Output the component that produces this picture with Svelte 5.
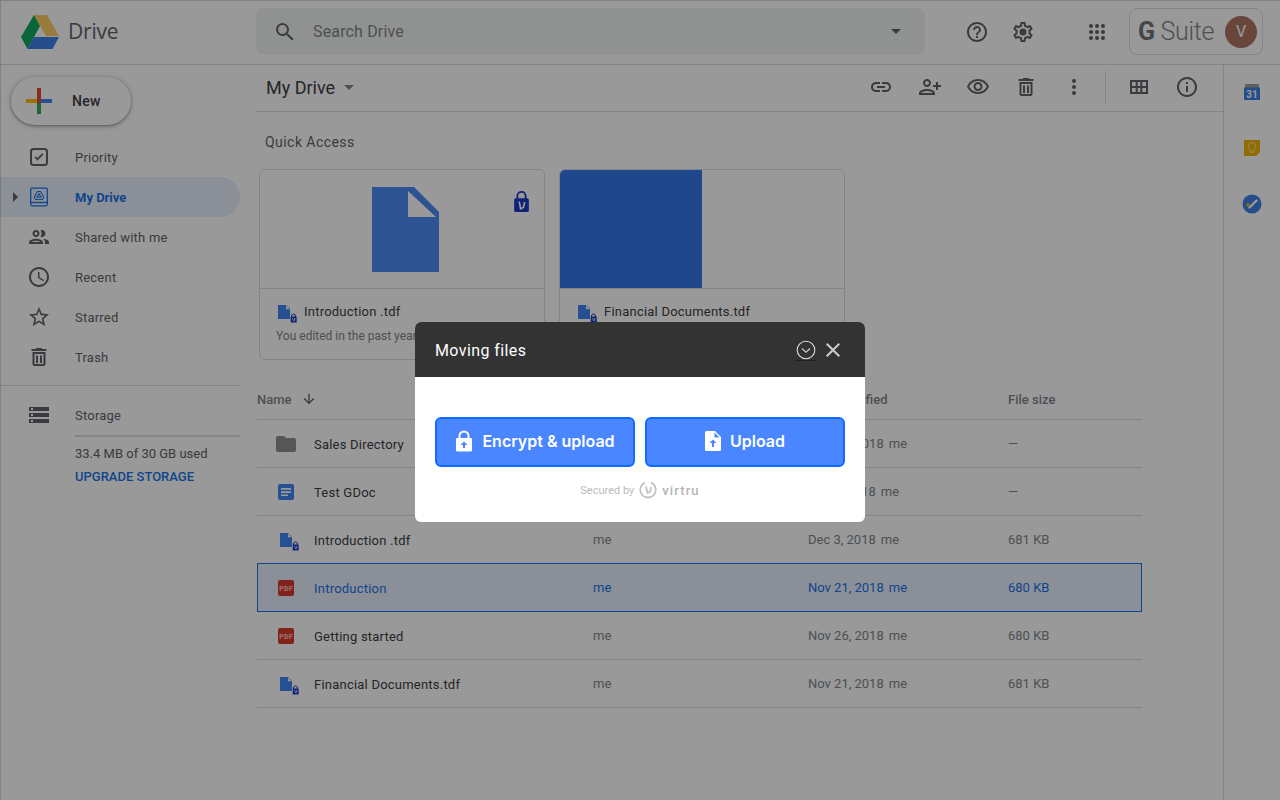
<script>
  const icons = {
    search: "M15.5 14h-.79l-.28-.27A6.471 6.471 0 0 0 16 9.5 6.5 6.5 0 1 0 9.5 16c1.61 0 3.09-.59 4.23-1.57l.27.28v.79l5 4.99L20.49 19l-4.99-5zm-6 0C7.01 14 5 11.99 5 9.5S7.01 5 9.5 5 14 7.01 14 9.5 11.99 14 9.5 14z",
    help: "M11 18h2v-2h-2v2zm1-16C6.48 2 2 6.48 2 12s4.48 10 10 10 10-4.48 10-10S17.52 2 12 2zm0 18c-4.41 0-8-3.59-8-8s3.59-8 8-8 8 3.59 8 8-3.59 8-8 8zm0-14c-2.21 0-4 1.79-4 4h2c0-1.1.9-2 2-2s2 .9 2 2c0 2-3 1.75-3 5h2c0-2.25 3-2.5 3-5 0-2.21-1.79-4-4-4z",
    gear: "M19.43 12.98c.04-.32.07-.64.07-.98 0-.34-.03-.66-.07-.98l2.11-1.65c.19-.15.24-.42.12-.64l-2-3.46c-.09-.16-.26-.25-.44-.25-.06 0-.12.01-.17.03l-2.49 1c-.52-.4-1.08-.73-1.69-.98l-.38-2.65C14.46 2.18 14.25 2 14 2h-4c-.25 0-.46.18-.49.42l-.38 2.65c-.61.25-1.17.59-1.69.98l-2.49-1c-.06-.02-.12-.03-.18-.03-.17 0-.34.09-.43.25l-2 3.46c-.13.22-.07.49.12.64l2.11 1.65c-.04.32-.07.65-.07.98 0 .33.03.66.07.98l-2.11 1.65c-.19.15-.24.42-.12.64l2 3.46c.09.16.26.25.44.25.06 0 .12-.01.17-.03l2.49-1c.52.4 1.08.73 1.69.98l.38 2.65c.03.24.24.42.49.42h4c.25 0 .46-.18.49-.42l.38-2.65c.61-.25 1.17-.59 1.69-.98l2.49 1c.06.02.12.03.18.03.17 0 .34-.09.43-.25l2-3.46c.12-.22.07-.49-.12-.64l-2.11-1.65zm-1.98-1.71c.04.31.05.52.05.73 0 .21-.02.43-.05.73l-.14 1.13.89.7 1.08.84-.7 1.21-1.27-.51-1.04-.42-.9.68c-.43.32-.84.56-1.25.73l-1.06.43-.16 1.13-.2 1.35h-1.4l-.19-1.35-.16-1.13-1.06-.43c-.43-.18-.83-.41-1.23-.71l-.91-.7-1.06.43-1.27.51-.7-1.21 1.08-.84.89-.7-.14-1.13c-.03-.31-.05-.54-.05-.74s.02-.43.05-.73l.14-1.13-.89-.7-1.08-.84.7-1.21 1.27.51 1.04.42.9-.68c.43-.32.84-.56 1.25-.73l1.06-.43.16-1.13.2-1.35h1.39l.19 1.35.16 1.13 1.06.43c.43.18.83.41 1.23.71l.91.7 1.06-.43 1.27-.51.7 1.21-1.07.85-.89.7.14 1.13zM12 8.5a3.5 3.5 0 1 0 0 7 3.5 3.5 0 0 0 0-7z",
    apps: "M6 8a2 2 0 1 0 0-4 2 2 0 0 0 0 4zm6 0a2 2 0 1 0 0-4 2 2 0 0 0 0 4zm6 0a2 2 0 1 0 0-4 2 2 0 0 0 0 4zM6 14a2 2 0 1 0 0-4 2 2 0 0 0 0 4zm6 0a2 2 0 1 0 0-4 2 2 0 0 0 0 4zm6 0a2 2 0 1 0 0-4 2 2 0 0 0 0 4zM6 20a2 2 0 1 0 0-4 2 2 0 0 0 0 4zm6 0a2 2 0 1 0 0-4 2 2 0 0 0 0 4zm6 0a2 2 0 1 0 0-4 2 2 0 0 0 0 4z",
    link: "M3.9 12c0-1.71 1.39-3.1 3.1-3.1h4V7H7c-2.76 0-5 2.24-5 5s2.24 5 5 5h4v-1.9H7c-1.71 0-3.1-1.39-3.1-3.1zM8 13h8v-2H8v2zm9-6h-4v1.9h4c1.71 0 3.1 1.39 3.1 3.1s-1.39 3.1-3.1 3.1h-4V17h4c2.76 0 5-2.24 5-5s-2.24-5-5-5z",
    personAdd: "M9 12c2.21 0 4-1.79 4-4s-1.79-4-4-4-4 1.79-4 4 1.79 4 4 4zm0-6c1.1 0 2 .9 2 2s-.9 2-2 2-2-.9-2-2 .9-2 2-2zm0 8c-2.67 0-8 1.34-8 4v2h16v-2c0-2.66-5.33-4-8-4zm-6 4c.22-.72 3.31-2 6-2 2.7 0 5.8 1.29 6 2H3zm17-3v-3h3v-2h-3V7h-2v3h-3v2h3v3h2z",
    eye: "M12 6c3.79 0 7.17 2.13 8.82 5.5C19.17 14.87 15.79 17 12 17s-7.17-2.13-8.82-5.5C4.83 8.13 8.21 6 12 6m0-2C7 4 2.73 7.11 1 11.5 2.73 15.89 7 19 12 19s9.27-3.11 11-7.5C21.27 7.11 17 4 12 4zm0 5c1.38 0 2.5 1.12 2.5 2.5S13.38 14 12 14s-2.5-1.12-2.5-2.5S10.62 9 12 9m0-2c-2.48 0-4.5 2.02-4.5 4.5S9.52 16 12 16s4.5-2.02 4.5-4.5S14.48 7 12 7z",
    trash: "M14.5 3h-5l-1 1H4.500v2h15V4h-4l-1-1zM5.500 7v12c0 1.1.9 2 2 2h9c1.100 0 2-.9 2-2V7h-13zm2 2h9v10h-9V9zm1.500 1.500V18h2v-7.500H9zm4 0V18h2v-7.500h-2z",
    more: "M12 8a2 2 0 1 0 0-4 2 2 0 0 0 0 4zm0 2a2 2 0 1 0 0 4 2 2 0 0 0 0-4zm0 6a2 2 0 1 0 0 4 2 2 0 0 0 0-4z",
    grid: "M3 5v14h18V5H3zm2 2h3.7v4H5V7zm5.7 0h2.6v4h-2.6V7zm4.6 0H19v4h-3.7V7zM5 13h3.7v4H5v-4zm5.7 0h2.6v4h-2.6v-4zm4.6 0H19v4h-3.7v-4z",
    info: "M11 7h2v2h-2V7zm0 4h2v6h-2v-6zm1-9C6.48 2 2 6.48 2 12s4.48 10 10 10 10-4.48 10-10S17.52 2 12 2zm0 18c-4.41 0-8-3.59-8-8s3.59-8 8-8 8 3.59 8 8-3.59 8-8 8z",
    priority: "M6.500 3h11A3.500 3.500 0 0 1 21 6.500v11a3.500 3.500 0 0 1-3.500 3.500h-11A3.500 3.500 0 0 1 3 17.500v-11A3.500 3.500 0 0 1 6.500 3zm0 2A1.500 1.500 0 0 0 5 6.500v11A1.500 1.500 0 0 0 6.500 19h11a1.500 1.500 0 0 0 1.500-1.500v-11A1.500 1.500 0 0 0 17.500 5h-11zm4 10.600l-3-3 1.300-1.300 1.700 1.700 4.700-4.700 1.300 1.300-6 6z",
    people: "M9 13.75c-2.34 0-7 1.17-7 3.5V19h14v-1.75c0-2.33-4.66-3.5-7-3.5zM4.34 17c.84-.58 2.87-1.25 4.66-1.25s3.82.67 4.66 1.25H4.34zM9 12c1.93 0 3.5-1.57 3.5-3.5S10.93 5 9 5 5.5 6.57 5.5 8.5 7.07 12 9 12zm0-5c.83 0 1.5.67 1.5 1.5S9.83 10 9 10s-1.5-.67-1.5-1.5S8.17 7 9 7zm7.04 6.81c1.16.84 1.96 1.96 1.96 3.44V19h4v-1.75c0-2.02-3.5-3.17-5.96-3.44zM15 12c1.93 0 3.5-1.57 3.5-3.5S16.93 5 15 5c-.54 0-1.04.13-1.5.35.63.89 1 1.98 1 3.15s-.37 2.26-1 3.15c.46.22.96.35 1.5.35z",
    clock: "M11.99 2C6.47 2 2 6.48 2 12s4.47 10 9.99 10C17.52 22 22 17.52 22 12S17.52 2 11.99 2zM12 20c-4.42 0-8-3.58-8-8s3.58-8 8-8 8 3.58 8 8-3.58 8-8 8zm.5-13H11v6l5.25 3.15.75-1.23-4.5-2.67z",
    star: "M22 9.24l-7.19-.62L12 2 9.19 8.63 2 9.24l5.46 4.73L5.82 21 12 17.27 18.18 21l-1.63-7.03L22 9.24zM12 15.4l-3.76 2.27 1-4.28-3.32-2.88 4.38-.38L12 6.1l1.71 4.04 4.38.38-3.32 2.88 1 4.28L12 15.4z",
    storage: "M2 20h20v-4H2v4zm2-3h2v2H4v-2zM2 4v4h20V4H2zm4 3H4V5h2v2zm-4 7h20v-4H2v4zm2-3h2v2H4v-2z",
    arrowDown: "M20 12l-1.41-1.41L13 16.17V4h-2v12.17l-5.58-5.59L4 12l8 8 8-8z",
    close: "M19 6.41L17.59 5 12 10.59 6.41 5 5 6.41 10.59 12 5 17.59 6.41 19 12 13.41 17.59 19 19 17.59 13.41 12z"
  };

  const nav = [
    { label: "Priority", icon: "priority" },
    { label: "My Drive", icon: "drive", active: true },
    { label: "Shared with me", icon: "people" },
    { label: "Recent", icon: "clock" },
    { label: "Starred", icon: "star" },
    { label: "Trash", icon: "trash" }
  ];

  const actions = ["link", "personAdd", "eye", "trash", "more"];

  const files = [
    { name: "Sales Directory", type: "folder", owner: "me", date: "Nov 26, 2018", size: "—" },
    { name: "Test GDoc", type: "doc", owner: "me", date: "Dec 3, 2018", size: "—" },
    { name: "Introduction .tdf", type: "tdf", owner: "me", date: "Dec 3, 2018", size: "681 KB" },
    { name: "Introduction", type: "pdf", owner: "me", date: "Nov 21, 2018", size: "680 KB", selected: true },
    { name: "Getting started", type: "pdf", owner: "me", date: "Nov 26, 2018", size: "680 KB" },
    { name: "Financial Documents.tdf", type: "tdf", owner: "me", date: "Nov 21, 2018", size: "681 KB" }
  ];
</script>

{#snippet icon(name, size = 24)}
  <svg class="icon" width={size} height={size} viewBox="0 0 24 24" fill="currentColor"><path d={icons[name]} /></svg>
{/snippet}

{#snippet tdf()}
  <svg class="tdf" width="24" height="24" viewBox="0 0 24 24">
    <path d="M6 5h8l4 4v10H6z" fill="#4285f4" />
    <path d="M14 5.600v3.600h3.600z" fill="#fff" />
    <path d="M19.500 17v-1a2 2 0 0 1 4 0v1" fill="none" stroke="#1a3ac4" stroke-width="1" />
    <rect x="18.700" y="16.500" width="6" height="6" rx=".6" fill="#1a3ac4" />
    <path d="M20.500 18l1.100 2.800 1-.5.300-2.300" fill="none" stroke="#fff" stroke-width=".8" />
  </svg>
{/snippet}

{#snippet fileIcon(type)}
  {#if type === "folder"}
    <svg width="24" height="24" viewBox="0 0 24 24" fill="#8f8f8f"><path d="M10 4H4c-1.1 0-2 .9-2 2v12c0 1.1.9 2 2 2h16c1.1 0 2-.9 2-2V8c0-1.1-.9-2-2-2h-8l-2-2z" /></svg>
  {:else if type === "doc"}
    <svg width="24" height="24" viewBox="0 0 24 24"><rect x="4" y="4" width="16" height="16" rx="2" fill="#4285f4" /><path d="M7 8h10v1.700H7zM7 11.200h10v1.700H7zM7 14.400h7v1.700H7z" fill="#fff" /></svg>
  {:else if type === "pdf"}
    <svg width="24" height="24" viewBox="0 0 24 24"><rect x="4" y="4" width="16" height="16" rx="2" fill="#d93a2e" /><text x="12" y="14.600" text-anchor="middle" class="pdf">PDF</text></svg>
  {:else}
    {@render tdf()}
  {/if}
{/snippet}

<div class="app">
  <header class="topbar">
    <div class="brand">
      <svg width="38" height="34" viewBox="0 0 38 34">
        <path d="M13 0h13l12 21H25z" fill="#ffcf63" />
        <path d="M13 0L0 22l6.500 12L19 11z" fill="#11a861" />
        <path d="M13 22h25l-6.500 12H6.500z" fill="#3f7fe8" />
      </svg>
      <span class="brand-name">Drive</span>
    </div>
    <div class="search">
      <span class="search-icon">{@render icon("search")}</span>
      <span class="placeholder">Search Drive</span>
      <span class="caret big"></span>
    </div>
    <div class="top-icons">
      {@render icon("help")}
      {@render icon("gear")}
      <span class="apps">{@render icon("apps")}</span>
    </div>
    <div class="account">
      <span class="gsuite"><b>G</b> Suite</span>
      <span class="avatar">V</span>
    </div>
  </header>

  <div class="body">
    <aside class="sidebar">
      <button class="new-btn">
        <svg width="26" height="26" viewBox="0 0 26 26">
          <path d="M0 11h11v4H0z" fill="#fbbc05" />
          <path d="M11 0h4v11h-4z" fill="#ea4335" />
          <path d="M15 11h11v4H15z" fill="#4285f4" />
          <path d="M11 15h4v11h-4z" fill="#34a853" />
          <path d="M11 11h4v4h-4z" fill="#ea4335" />
        </svg>
        New
      </button>
      <nav class="nav">
        {#each nav as item}
          <div class="nav-item" class:active={item.active}>
            {#if item.active}<span class="tri"></span>{/if}
            {#if item.icon === "drive"}
              <svg class="nav-icon" width="24" height="24" viewBox="0 0 24 24" fill="none" stroke="#1a73e8" stroke-width="1.300">
                <rect x="3.700" y="3.200" width="16.600" height="17.600" rx="1.500" />
                <path d="M3.700 17.500h16.600" />
                <path d="M10.500 6.500h3l3.300 5.700-1.500 2.300H8.700l-1.500-2.300z M12 8.800l-2 3.400h4z" stroke-width="1.100" />
              </svg>
            {:else}
              <span class="nav-icon">{@render icon(item.icon)}</span>
            {/if}
            <span>{item.label}</span>
          </div>
        {/each}
      </nav>
      <div class="storage">
        <div class="storage-head">
          <span class="nav-icon">{@render icon("storage")}</span>
          <span>Storage</span>
        </div>
        <div class="storage-info">
          <div class="bar"></div>
          <div class="used">33.4 MB of 30 GB used</div>
          <div class="upgrade">UPGRADE STORAGE</div>
        </div>
      </div>
    </aside>

    <main class="content">
      <div class="toolbar">
        <span class="title">My Drive</span>
        <span class="caret"></span>
        <div class="actions">
          {#each actions as a}
            <span class="action">{@render icon(a)}</span>
          {/each}
          <span class="divider"></span>
          <span class="action">{@render icon("grid")}</span>
          <span class="action">{@render icon("info")}</span>
        </div>
      </div>

      <div class="scroll">
        <h2>Quick Access</h2>
        <div class="cards">
          <div class="card">
            <div class="preview">
              <svg class="sheet" width="67" height="85" viewBox="0 0 67 85">
                <path d="M0 0h42l25 25v60H0z" fill="#4c8bf5" />
                <path d="M36 4v26h28z" fill="#fff" />
              </svg>
              <svg class="lock" width="17" height="23" viewBox="0 0 18 25">
                <path d="M4.500 11V6.500a4.500 4.500 0 0 1 9 0V11" fill="none" stroke="#1a3ac4" stroke-width="2" />
                <rect x="1" y="9" width="16" height="15" rx="2" fill="#1a3ac4" />
                <path d="M6.500 12.500l1.500 8 3-1.500 1.500-6" fill="none" stroke="#fff" stroke-width="1.800" />
              </svg>
            </div>
            <div class="card-foot">
              <div class="card-name">{@render tdf()}<span>Introduction .tdf</span></div>
              <div class="card-sub">You edited in the past year</div>
            </div>
          </div>
          <div class="card">
            <div class="preview half"><span class="half-fill"></span></div>
            <div class="card-foot">
              <div class="card-name">{@render tdf()}<span>Financial Documents.tdf</span></div>
              <div class="card-sub">You edited in the past year</div>
            </div>
          </div>
        </div>

        <div class="table">
          <div class="row head">
            <div class="name-head">Name <span class="arrow">{@render icon("arrowDown", 16)}</span></div>
            <div>Owner</div>
            <div>Last modified</div>
            <div>File size</div>
          </div>
          {#each files as f}
            <div class="row" class:selected={f.selected}>
              <div class="name-cell">
                <span class="file-icon">{@render fileIcon(f.type)}</span>
                <span class="file-name">{f.name}</span>
              </div>
              <div class="meta">{f.owner}</div>
              <div class="meta date"><span>{f.date}</span><span class="me">me</span></div>
              <div class="meta">{f.size}</div>
            </div>
          {/each}
        </div>
      </div>
    </main>

    <aside class="rail">
      <svg width="20" height="20" viewBox="0 0 20 20">
        <rect x="3" y="2" width="14" height="5" fill="#9e9e9e" />
        <rect x="2" y="5.500" width="16" height="12.500" fill="#3f7fe8" />
        <text x="10" y="16" text-anchor="middle" class="cal">31</text>
      </svg>
      <svg width="20" height="20" viewBox="0 0 20 20">
        <path d="M2 2h16v12l-4 4H2z" fill="#f4b400" />
        <path d="M10 4.500a4 4 0 0 0-2.300 7.200V13h4.600v-1.300A4 4 0 0 0 10 4.500zM8.500 14.500h3" fill="none" stroke="#ffe9a8" stroke-width="1" />
      </svg>
      <svg width="20" height="20" viewBox="0 0 20 20">
        <circle cx="10" cy="10" r="9.500" fill="#3f7fe8" />
        <circle cx="6" cy="11" r="1.700" fill="#fbbc05" />
        <path d="M7.500 13.500L14.500 6.500" stroke="#fff" stroke-width="2.400" stroke-linecap="round" />
      </svg>
    </aside>
  </div>

  <div class="overlay">
    <div class="modal">
      <div class="modal-head">
        <span class="modal-title">Moving files</span>
        <div class="modal-tools">
          <span class="collapse">
            <svg class="icon" width="20" height="20" viewBox="0 0 20 20" fill="none" stroke="#ddd" stroke-width="1.100">
              <circle cx="10" cy="10" r="8.800" />
              <path d="M6 8.500l4 3.800 4-3.800" />
            </svg>
          </span>
          <span class="x">{@render icon("close", 24)}</span>
        </div>
      </div>
      <div class="modal-body">
        <div class="buttons">
          <button class="primary">
            <svg width="18" height="22" viewBox="0 0 18 22">
              <path d="M4.500 9V6a4.500 4.500 0 0 1 9 0v3" fill="none" stroke="#fff" stroke-width="2" />
              <path fill-rule="evenodd" fill="#fff" d="M2 8h14a1.500 1.500 0 0 1 1 1v11.500a1.500 1.500 0 0 1-1 1H2a1.500 1.500 0 0 1-1-1V9a1.500 1.500 0 0 1 1-1zM9 11.500L5.500 15H8v3h2v-3h2.500z" />
            </svg>
            Encrypt &amp; upload
          </button>
          <button class="primary">
            <svg width="16" height="20" viewBox="0 0 16 20">
              <path fill-rule="evenodd" fill="#fff" d="M1.500 0H10l6 6v12.500a1.500 1.500 0 0 1-1.500 1.500h-13A1.500 1.500 0 0 1 0 18.500v-17A1.500 1.500 0 0 1 1.500 0zM9.500 1.500V6.500h5zM8 8.500L4.500 12H7v4h2v-4h2.500z" />
            </svg>
            Upload
          </button>
        </div>
        <div class="secured">
          <span>Secured by</span>
          <svg width="18" height="18" viewBox="0 0 18 18" fill="none" stroke="#c4c4c4" stroke-width="1.800">
            <path d="M6 1.700A7.700 7.700 0 1 0 12 1.700" />
            <path d="M7 5.500l1.500 6.500 2.800-1.200.7-5" />
          </svg>
          <span class="virtru">virtru</span>
        </div>
      </div>
    </div>
  </div>
</div>

<style>
  :global(body) {
    margin: 0;
    background: #fff;
    overflow: hidden;
  }

  .app {
    position: relative;
    width: 1280px;
    height: 800px;
    overflow: hidden;
    display: flex;
    flex-direction: column;
    box-sizing: border-box;
    font-family: Roboto, sans-serif;
    font-size: 13px;
    color: #3c4043;
    background: #fff;
  }

  .icon {
    display: block;
  }

  .topbar {
    height: 65px;
    flex: none;
    box-sizing: border-box;
    border-bottom: 1px solid #dadce0;
    display: flex;
    align-items: center;
    padding-bottom: 1px;
  }

  .brand {
    width: 256px;
    flex: none;
    box-sizing: border-box;
    padding-left: 21px;
    display: flex;
    align-items: center;
    gap: 9px;
    font-size: 21px;
    color: #5f6368;
    font-family: "Open Sans", sans-serif;
    letter-spacing: -0.2px;
  }

  .brand-name {
    margin-top: -2px;
  }

  .search {
    width: 669px;
    height: 47px;
    flex: none;
    border-radius: 8px;
    background: #f1f3f4;
    display: flex;
    align-items: center;
    color: #5f6368;
  }

  .search-icon {
    margin-left: 17px;
  }

  .placeholder {
    margin-left: 16px;
    font-size: 16px;
    letter-spacing: 0.15px;
    color: #80868b;
    flex: 1;
  }

  .caret {
    width: 0;
    height: 0;
    border-left: 5px solid transparent;
    border-right: 5px solid transparent;
    border-top: 5px solid #80868b;
  }

  .caret.big {
    margin-right: 24px;
    border-top-color: #5f6368;
  }

  .top-icons {
    display: flex;
    align-items: center;
    gap: 22px;
    margin-left: 40px;
    color: #5f6368;
    width: 164px;
    box-sizing: border-box;
  }

  .apps {
    margin-left: 28px;
  }

  .account {
    width: 134px;
    height: 47px;
    box-sizing: border-box;
    border: 1px solid #dadce0;
    border-radius: 8px;
    display: flex;
    align-items: center;
    justify-content: space-between;
    padding: 0 5px 0 8px;
  }

  .gsuite {
    font-size: 25px;
    color: #80868b;
    font-weight: 300;
    letter-spacing: -0.3px;
  }

  .gsuite b {
    color: #70757a;
    font-weight: 700;
  }

  .avatar {
    width: 32px;
    height: 32px;
    border-radius: 50%;
    background: #ad7660;
    color: #fff;
    font-size: 16px;
    display: flex;
    align-items: center;
    justify-content: center;
  }

  .body {
    flex: 1;
    display: flex;
    min-height: 0;
    margin-top: -1px;
  }

  .sidebar {
    width: 256px;
    flex: none;
  }

  .new-btn {
    margin: 13px 0 0 11px;
    width: 120px;
    height: 48px;
    border: none;
    border-radius: 24px;
    background: #fff;
    box-shadow: 0 1px 3px rgba(60, 64, 67, 0.5), 0 1px 6px rgba(60, 64, 67, 0.2);
    font-family: inherit;
    font-size: 14px;
    font-weight: 500;
    letter-spacing: 0.25px;
    color: #3c4043;
    display: flex;
    align-items: center;
    gap: 20px;
    padding: 0 0 0 15px;
  }

  .nav {
    margin-top: 12px;
    width: 240px;
    padding-bottom: 8px;
    border-bottom: 1px solid #dadce0;
  }

  .nav-item {
    position: relative;
    height: 40px;
    display: flex;
    align-items: center;
    padding-left: 27px;
    gap: 24px;
    font-weight: 400;
    letter-spacing: 0.22px;
    color: #5f6368;
  }

  .nav-item.active {
    background: #e8f0fe;
    border-radius: 0 20px 20px 0;
    color: #1a73e8;
    font-weight: 700;
    letter-spacing: 0;
  }

  .tri {
    position: absolute;
    left: 13px;
    top: 15px;
    border-top: 5px solid transparent;
    border-bottom: 5px solid transparent;
    border-left: 5px solid #5f6368;
  }

  .nav-icon {
    display: block;
    width: 24px;
    height: 24px;
    flex: none;
  }

  .storage {
    width: 240px;
    padding: 17px 0 0 27px;
    box-sizing: border-box;
  }

  .storage-head {
    display: flex;
    align-items: center;
    gap: 24px;
    letter-spacing: 0.22px;
    color: #5f6368;
    height: 24px;
  }

  .storage-info {
    margin-left: 48px;
  }

  .bar {
    height: 2px;
    background: #dadce0;
    margin-top: 8px;
  }

  .used {
    margin-top: 9px;
    color: #5f6368;
    line-height: 16px;
  }

  .upgrade {
    margin-top: 7px;
    color: #1a73e8;
    font-weight: 500;
    line-height: 16px;
  }

  .content {
    flex: 1;
    min-width: 0;
  }

  .toolbar {
    height: 48px;
    box-sizing: border-box;
    border-bottom: 1px solid #dadce0;
    display: flex;
    align-items: center;
    padding: 0 0 1px 10px;
    gap: 9px;
  }

  .title {
    font-size: 18px;
    color: #3c4043;
  }

  .actions {
    margin-left: auto;
    display: flex;
    align-items: center;
    margin-right: 24px;
    color: #5f6368;
  }

  .action {
    width: 24px;
    margin-left: 24.300px;
  }

  .divider {
    width: 1px;
    height: 32px;
    background: #dadce0;
    margin: 0 -4px 0 19px;
  }

  .scroll {
    padding: 0 0 0 1px;
    width: 885px;
  }

  h2 {
    margin: 21px 0 0 8px;
    font-size: 14px;
    line-height: 18px;
    font-weight: 400;
    letter-spacing: 0.45px;
    color: #5f6368;
  }

  .cards {
    display: flex;
    gap: 14px;
    margin: 18px 0 0 2px;
  }

  .card {
    width: 286px;
    height: 191px;
    box-sizing: border-box;
    border: 1px solid #dadce0;
    border-radius: 6px;
    overflow: hidden;
  }

  .preview {
    position: relative;
    border-bottom: 1px solid #dadce0;
    display: flex;
    justify-content: center;
    padding-top: 17px;
    height: 101px;
  }

  .sheet {
    margin-left: 6px;
  }

  .preview.half {
    padding: 0;
    height: 118px;
    justify-content: flex-start;
  }

  .half-fill {
    width: 142px;
    background: #3579ea;
  }

  .lock {
    position: absolute;
    top: 20px;
    right: 14px;
  }

  .card-foot {
    padding: 12px 0 0 16px;
  }

  .card-name {
    display: flex;
    align-items: center;
    height: 20px;
    gap: 8px;
    letter-spacing: 0.22px;
    color: #3c4043;
  }

  .card-name .tdf {
    margin: 2px 0 0 -4px;
    overflow: visible;
    flex: none;
  }

  .card-sub {
    margin-top: 7px;
    font-size: 12px;
    line-height: 16px;
    color: #80868b;
    white-space: nowrap;
  }

  .table {
    margin-top: 19px;
  }

  .row {
    display: grid;
    grid-template-columns: 336px 215px 200px 1fr;
    height: 48px;
    box-sizing: border-box;
    align-items: center;
    border-bottom: 1px solid #dadce0;
    letter-spacing: 0.22px;
    color: #3c4043;
  }

  .row.head {
    height: 41px;
    font-weight: 500;
    letter-spacing: 0;
    color: #80868b;
  }

  .name-head {
    display: flex;
    align-items: center;
    gap: 9px;
  }

  .arrow {
    color: #5f6368;
  }

  .row.selected {
    background: #e8f0fe;
    border: 1px solid #1a73e8;
    color: #1a73e8;
    margin-top: -1px;
    height: 49px;
    grid-template-columns: 335px 215px 200px 1fr;
  }

  .name-cell {
    display: flex;
    align-items: center;
    padding-left: 17px;
    gap: 16px;
  }

  .selected .name-cell {
    padding-left: 16px;
  }

  .file-icon {
    display: block;
    width: 24px;
    height: 24px;
  }

  .file-icon :global(svg) {
    overflow: visible;
    display: block;
  }

  .file-name {
    white-space: nowrap;
    margin-top: 2px;
  }

  .meta {
    letter-spacing: 0;
    color: #80868b;
  }

  .date {
    display: flex;
    gap: 5px;
  }

  .me {
    color: #80868b;
  }

  .selected .meta,
  .selected .me {
    color: #1a73e8;
  }

  .pdf {
    font-family: Roboto, sans-serif;
    font-size: 7px;
    font-weight: 900;
    letter-spacing: 0.2px;
    fill: #ffb8b0;
  }

  .rail {
    width: 57px;
    flex: none;
    box-sizing: border-box;
    border-left: 1px solid #dadce0;
    display: flex;
    flex-direction: column;
    align-items: center;
    padding-top: 18px;
    gap: 36px;
  }

  .cal {
    font-family: Roboto, sans-serif;
    font-size: 10px;
    font-weight: 700;
    fill: #fff;
  }

  .overlay {
    position: absolute;
    inset: 0;
    background: rgba(0, 0, 0, 0.4);
    box-shadow: inset 1px 1px 0 rgba(0, 0, 0, 0.15);
    display: flex;
    justify-content: center;
    align-items: flex-start;
  }

  .modal {
    width: 450px;
    height: 200px;
    margin-top: 322px;
    border-radius: 6px;
    overflow: hidden;
    background: #fff;
  }

  .modal-head {
    height: 55px;
    background: #333;
    color: #fff;
    display: flex;
    align-items: center;
    justify-content: space-between;
    padding: 0 20px;
    font-size: 16px;
  }

  .modal-title {
    letter-spacing: 0.4px;
    margin-top: 2px;
  }

  .modal-tools {
    display: flex;
    align-items: center;
    gap: 5px;
  }

  .collapse {
    border-bottom: 1px dotted #111;
    margin-top: 1px;
  }

  .x {
    color: #ccc;
  }

  .modal-body {
    padding: 40px 20px 0;
  }

  .buttons {
    display: grid;
    grid-template-columns: 1fr 1fr;
    gap: 10px;
  }

  .primary {
    height: 50px;
    border: 2px solid #0f6cff;
    border-radius: 6px;
    background: #4a86ff;
    color: #fff;
    font-family: Inter, Roboto, sans-serif;
    font-size: 16px;
    font-weight: 600;
    display: flex;
    align-items: center;
    justify-content: center;
    gap: 9px;
    padding: 0 0 2px;
  }

  .secured {
    margin-top: 14px;
    display: flex;
    align-items: center;
    justify-content: center;
    gap: 5px;
    font-size: 11px;
    color: #bbb;
  }

  .virtru {
    font-size: 13px;
    font-weight: 500;
    letter-spacing: 1.1px;
    color: #b5b5b5;
  }
</style>
